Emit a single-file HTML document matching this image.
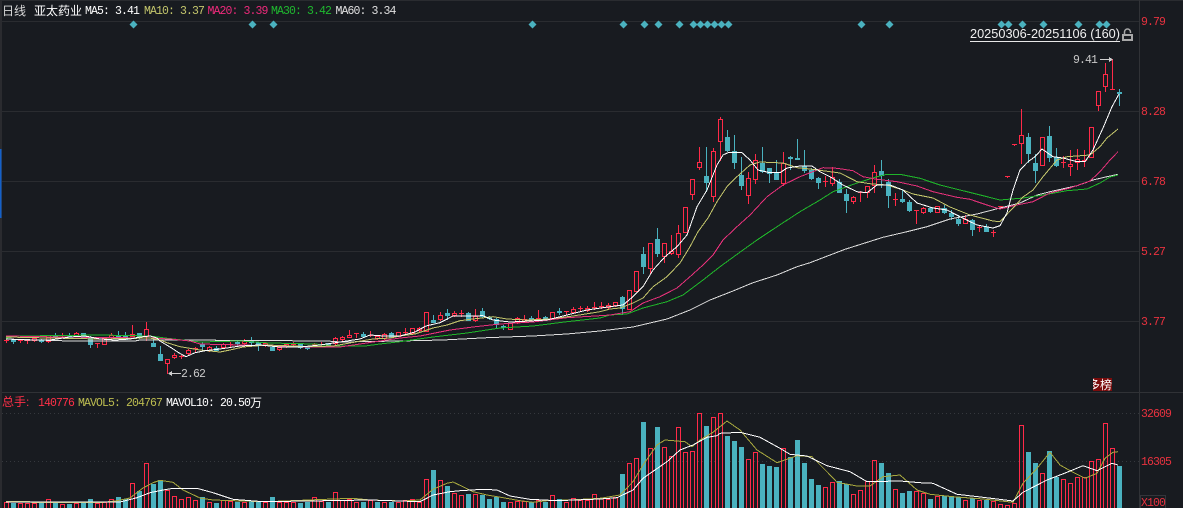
<!DOCTYPE html>
<html><head><meta charset="utf-8"><style>
html,body{margin:0;padding:0;background:#181b20;width:1183px;height:508px;overflow:hidden}
svg{display:block;position:absolute;left:0;top:0}
text{font-family:"Liberation Mono","WenQuanYi Zen Hei","Noto Sans CJK SC",monospace;font-size:11.5px;letter-spacing:-.9px}
.cjk{font-family:"Liberation Sans","WenQuanYi Zen Hei","Noto Sans CJK SC",sans-serif;font-size:12px;letter-spacing:0}
.l{fill:none;stroke-width:1;shape-rendering:crispEdges}
.ax{fill:#e8323f}
</style></head><body>
<svg id="s" width="1183" height="508" viewBox="0 0 1183 508" xmlns="http://www.w3.org/2000/svg">
<rect width="1183" height="508" fill="#181b20"/>
<rect x="0" y="0" width="2" height="508" fill="#2a2b2f"/>
<rect x="0" y="149" width="1.5" height="69" fill="#1460c8"/>
<g shape-rendering="crispEdges" fill="#2a2c30">
<rect x="0" y="0" width="1183" height="1"/>
<rect x="2" y="21" width="1137" height="1"/>
<rect x="2" y="111" width="1137" height="1"/>
<rect x="2" y="181" width="1137" height="1"/>
<rect x="2" y="251" width="1137" height="1"/>
<rect x="2" y="321" width="1137" height="1"/>
<rect x="2" y="392" width="1181" height="1" fill="#303236"/>
<rect x="1139" y="0" width="1" height="508" fill="#303236"/>
</g>
<line x1="2" y1="413.5" x2="1139" y2="413.5" stroke="#35383d" stroke-dasharray="1 3" shape-rendering="crispEdges"/>
<line x1="2" y1="461.5" x2="1139" y2="461.5" stroke="#35383d" stroke-dasharray="1 3" shape-rendering="crispEdges"/>

<text class="cjk" x="2" y="15" fill="#d8d8d8">日线</text>
<text class="cjk" x="34" y="15" fill="#fff">亚太药业</text>
<text x="85" y="14" fill="#fff">MA5: 3.41</text>
<text x="144" y="14" fill="#c4c66c">MA10: 3.37</text>
<text x="207.500" y="14" fill="#ee2a7b">MA20: 3.39</text>
<text x="271" y="14" fill="#1fb82f">MA30: 3.42</text>
<text x="335.500" y="14" fill="#e0e0e0">MA60: 3.34</text>

<text x="1141" y="25" class="ax">9.79</text>
<text x="1141" y="115" class="ax">8.28</text>
<text x="1141" y="185" class="ax">6.78</text>
<text x="1141" y="255" class="ax">5.27</text>
<text x="1141" y="325" class="ax">3.77</text>
<text x="1141" y="417" class="ax">32609</text>
<text x="1141" y="465" class="ax">16305</text>
<rect x="1140.500" y="495.500" width="25" height="14" fill="none" stroke="#33353a"/>
<text x="1141" y="506" class="ax">X100</text>

<text class="cjk" x="2" y="406" fill="#ff3048">总手:</text>
<text x="38" y="406" fill="#ff3048">140776</text>
<text x="78" y="406" fill="#bcbc50">MAVOL5: 204767</text>
<text x="166" y="406" fill="#fff">MAVOL10: 20.50</text>
<text class="cjk" x="250" y="407" fill="#fff">万</text>

<text x="970" y="38" textLength="150" lengthAdjust="spacingAndGlyphs" style="font-family:'Liberation Sans',sans-serif;font-size:12.500px;letter-spacing:0" fill="#f0f0f0">20250306-20251106 (160)</text>
<rect x="970" y="41" width="150" height="1" fill="#e8e8e8" shape-rendering="crispEdges"/>
<g fill="none" stroke="#a8a8a8">
<path d="M1124.500 34V32a3 3 0 0 1 6 0v1" stroke-width="1.500"/>
<path fill-rule="evenodd" fill="#a8a8a8" stroke="none" d="M1122 34h11v7h-11zM1124 36v3h7v-3z"/>
</g>

<g id="dm" fill="#4ab2bf"></g>
<g id="vol"></g>
<g id="can"></g>

<polyline class="l" stroke="#ddd" points="6,339 70,341 135,341 140,340 290,340.500 295,341 327,341 340,342 400,341 443,340 487,337.700 533,336 567,334 600,331 633,327 667,319 690,310 710,300 733,291 753,282.700 777,275 797,266.700 810,262.700 845,249.300 883,237.300 907,231.700 927,226.700 950,219 977,214 1000,208 1020,203 1037,195 1050,191.700 1077,185.700 1093,180 1107,176.700 1118,174.300"/>
<polyline class="l" stroke="#1fb52a" points="6,338 20,336 60,335.500 100,335 150,336 165,338 200,342 240,341 270,343 315,344 333,346 365,346 380,344 400,341.700 433,337 467,333 500,328 533,326 567,321.700 600,318 610,315 627,314 643,308 667,301.700 683,295 703,280 720,266.700 743,250 757,240 777,226.700 800,211.700 820,200 833,191.700 857,183 877,176.700 887,174.300 900,174.300 920,178.300 940,185 967,191.700 987,196.700 1000,200 1023,198 1043,195 1067,190.700 1087,189 1100,183 1110,177 1118,175"/>
<polyline class="l" stroke="#e6317a" points="6,336 60,337 150,338 170,339 190,341 200,344 280,346 300,347 340,347 400,338 420,336 450,330 473,327 500,324 533,322 567,317.700 600,315.700 610,315 630,311.700 643,303 660,296.700 677,288 690,276.700 703,265 713,255 723,240 737,226.700 750,215 767,196.700 783,185 800,176.700 823,167.700 837,168.300 853,170.700 863,176.700 877,179.300 897,181.700 917,186 933,191.700 957,197.300 970,199.300 990,206 1000,209 1017,205 1033,201.700 1050,193 1070,188 1090,181 1100,171.700 1110,160 1118,151.700"/>
<polyline class="l" stroke="#c4c66c" points="6,337 50,338 100,339 150,338 160,340 167,342.700 180,346.700 200,350 220,352 230,350 243,347 267,345 293,346 313,346.700 333,346 357,341.700 373,339 390,338 400,336 415,334 433,328 447,325 460,320.700 473,319 493,316.700 507,319 527,320 550,319 573,316 600,311.700 610,309 620,308 633,303 643,298 653,286.700 667,276.700 680,263 690,246.700 698,231.700 708,218 717,201.700 727,186.700 737,176.700 750,165 760,162 783,163 797,167.700 810,169 840,173 857,181.700 872,184 887,185 903,190 913,194 933,198 950,207 970,215 993,221 1000,221.700 1013,208 1023,197 1033,190 1043,176.700 1057,160 1067,156.700 1090,155 1100,146.700 1107,138 1118,129"/>
<polyline class="l" stroke="#fff" points="6,339 30,340 50,340 70,337 85,336 100,339 115,340 130,339 140,337 150,336 157,338 160,341 170,347 180,353.500 186,356.700 195,352.700 205,350.700 220,349 240,346 260,345 280,347 300,347 320,345 340,342 360,339 370,335 384,336 400,336 415,332 426,326 440,322.700 453,316 467,316 483,315.700 493,320 510,322 530,321 547,320 567,315 587,310 610,306.700 623,305 633,296.700 643,286.700 653,270 665,256.700 677,246.700 687,235 697,206.700 707,190 717,165 723,155 728,152.700 742,152.700 750,160 758,170 770,172.700 780,172.700 787,168 800,166 812,166 820,171.700 830,176.700 843,185 857,191.700 867,192.700 877,185 890,185 903,190 917,203 933,208 947,210 960,216.700 977,225 993,228 1000,225.700 1007,213 1013,190 1020,170 1028,161.700 1035,156.700 1042,149 1053,156.700 1063,158 1077,161.700 1085,161.700 1093,150 1103,128 1112,106.700 1119,94"/>

<polyline class="l" stroke="#a8a83e" points="6,501.700 30,501.700 33,502.700 100,502.700 117,500.700 130,498 143,488 153,482.700 160,480.300 173,482.300 183,490 200,498 213,500 233,500.700 267,501.700 333,499 353,498.300 370,500 403,501 420,500 433,489.300 447,483.300 453,482 463,486.700 473,491.700 487,495 503,497.700 520,500.700 533,502.300 547,500.700 570,500 600,498.300 620,495 633,481.700 643,465 657,445 665,440 685,441.700 692,446.700 700,440 713,432.300 727,421 740,430 757,450 777,462.700 797,455.700 812,456.700 827,471.700 837,482.300 857,486 870,486 883,476.700 900,475 917,490 930,494.300 953,496.700 983,499 1013,502.300 1023,483.300 1037,468.300 1050,452.300 1060,465 1073,472.300 1085,478.300 1097,473.300 1105,458.300 1113,452.300 1118,451.700"/>
<polyline class="l" stroke="#fff" points="6,502 120,502 137,497.700 150,492.700 163,490 173,488.300 197,488.300 213,492.700 233,499.300 263,501.700 370,500 420,501.700 433,495 450,491.700 460,490.700 483,489.300 497,490 510,496 530,499.300 557,500.700 600,499 617,497.700 633,490 643,478.300 667,461.700 680,450 693,445 707,437.300 717,435.700 720,433.300 740,432.300 760,437.300 780,448.300 790,454.300 807,456 827,465.700 850,471.700 867,481.700 900,481 920,482.700 933,483.300 957,494.300 983,497.300 1013,501 1023,492.300 1047,480 1067,472.300 1083,465.700 1097,470.700 1112,463.300 1118,465"/>

<g shape-rendering="crispEdges" fill="#cfcfcf">
<rect x="171" y="373" width="10" height="1"/>
<path d="M168 373.500L172 371V376z"/>
<rect x="1100" y="59" width="10" height="1"/>
<path d="M1113 59.500L1109 57V62z"/>
</g>
<text x="181" y="377" fill="#c8c8c8">2.62</text>
<text x="1073" y="63" fill="#c8c8c8">9.41</text>

<clipPath id="cp"><rect x="1093" y="378" width="19" height="13"/></clipPath>
<rect x="1093" y="378" width="19" height="13" fill="#7a0c0c"/>
<text class="cjk" x="1088" y="389" fill="#fff" clip-path="url(#cp)">多榜</text>
</svg>
<script>
var NS="http://www.w3.org/2000/svg",R="#ff2a48",T="#4ab2bf";
function el(p,n,a){var e=document.createElementNS(NS,n);for(var k in a)e.setAttribute(k,a[k]);p.appendChild(e);return e}
var dm=document.getElementById("dm");
[133,252,273,532,623,644,658,679,693,700,707,714,721,728,861,889,1001,1008,1022,1043,1078,1099,1106].forEach(function(x){
 var c=x+.5;el(dm,"polygon",{points:c+",20.500 "+(c+4)+",24.500 "+c+",28.500 "+(c-4)+",24.500"})});
var v=[501.7,-502.7,503.3,502.7,503.3,-502.7,499.3,-502.7,504.3,-504,502.7,-503.3,-499.3,502.7,501.7,499.3,-497,-499.3,483.3,-491,463.3,-484.3,-480.3,490,496.3,499.3,497.3,500,-497.3,501.7,-503,500,500.7,-502,501.7,-500.7,-501.7,502,-497.3,501.7,501.7,501.7,-503,-502.3,496.7,501,-501.7,492.3,500,499,501.7,-501.7,499.7,-501.7,501.7,-501.7,501.7,500,499.3,502,479,-470,480,-486,492.7,495,-494,494,-495,-499,-496.7,-502,502,500.7,501,-501.7,500,-501.7,495,-499.3,501.7,498.3,500,500,494.3,498.3,499,496.7,-474,463.3,458.3,-422.3,448.3,-427,447.3,455.7,427.3,452.3,451,413.3,-426,417.3,413.3,-436,-441,-447,459,452.3,-464,-466,-467,448.3,-457,-440,-463,-479,-485,487.3,482.3,-481,-484.3,494,490.3,481.3,460.3,-463,-473.3,489.3,-493,-491,490.7,493.3,-499,496.3,-495.7,-495.7,-497,500.3,-497.7,500.3,-500,501,504.3,505,503.3,425.3,-452,-463,473.3,-451,-476.7,479.3,483.3,477.3,476.7,461.3,459.3,423.3,448.3,-466];
var g=document.getElementById("vol");g.setAttribute("shape-rendering","crispEdges");
v.forEach(function(a,i){var x=6+7*i;
 if(a<0){var t=Math.round(-a);el(g,"rect",{x:x-2,y:t,width:5,height:510-t,fill:T})}
 else{var t=Math.round(a);el(g,"rect",{x:x-1.5,y:t+.5,width:4,height:515-t,fill:"none",stroke:R})}
});
var c=[[339.5,341,339,342,1],[339,341,339,343,0],[340,341,339,342,1],[340,341,339,343,1],[338,340,337,341,1],[340,341,339,342,0],[335,341,335,342,1],[334.5,335,333,336,0],[334.5,335.5,333,337,1],[334.5,335,333,336,0],[333,336,332,336,1],[333,337,333,337,0],[337,344,336,347,0],[343,344,343,347,1],[338,344,338,344,1],[335,337,333,338,1],[336,336.5,331,337,0],[336,339,332,339,0],[334,336,325,336,1],[333,337,333,338,0],[329,336,322,340,1],[343,346,338,346,0],[354,360,346,360,0],[359,363,359,373,1],[355,356.5,353,358,1],[356,357,355,358,1],[350,353,349,354,1],[348,349,347,352,1],
[344,346,342,350,0],[347,350,346,351,1],[348,350,346,349,0],[344,347,343,348,1],[344,345,342,347,1],[342,343,340,345,0],[341,343,339,345,1],[341,342,337,344,0],[342,345,342,350,0],[343,345,342,346,1],[347,350,345,350,0],[347,349,346,350,1],[344,346,343,347,1],[344,345,342,346,1],[344,347,344,348,0],[347,348,346,349,0],[344,345,343,346,1],[343.5,344.5,342,346,1],[343,345,343,346,0],[337.5,343,337,344,1],[337,339,336,340,1],[335,337,330,337,1],[333,334,333,337,1],[334,336,332,337,0],[335,336,331,336,1],[336,338,335,339,1],[334,338,333,339,1],[332.5,336.5,332,337,0],[332,336,332,336,1],[332,333,328,333,1],[328,333,328,333,1],[328,330,327,331,1],
[312,331,312,331,1],[320,322,315,322,0],[315,319,312,320,1],[313,315,309,319,0],[313,315,311,316,1],[313,314,310,316,1],[313,320,312,320,0],[316,320,309,321,1],[311,316,308,317,0],[317,318,316,319,0],[319,324,318,327,0],[326,327,325,329,0],[323,329,323,329,1],[318,322,317,323,1],[319,321,315,322,1],[318,319,316,321,0],[318,320,310,320,1],[317,318,316,319,0],[312,318,312,318,1],[311,312,308,314,0],[311,312,311,314,1],[309,312,307,313,1],[308,309,306,310,1],[308,310,306,311,1],[307,308,302,309,1],[306,307,302,308,1],[305,307,303,309,1],[302,305,302,306,1],[297,308,296,314,0],[290,309,290,309,1],[271,291,271,291,1],
[254,266,247,273,0],[243,268,243,273,1],[239,253,228,256,0],[243,256,243,262,1],[251,253,235,254,1],[233,254,225,257,1],[207,232,207,232,1],[179,194,179,199,1],[162,167,147,169,1],[176,182,147,191,0],[151,196,148,201,1],[119,141,117,160,1],[137,150,130,151,0],[151,162,135,168,0],[175,185,157,189,0],[178,195,172,203,1],[160,179,154,183,1],[163,171,147,172,0],[168,173,168,182,0],[173,179,160,179,0],[163,183,152,185,1],[157,158,156,169,0],[158,159,139,159,0],[166,170,150,172,0],[170,178,168,179,0],[178,182,177,188,0],[181,182,176,186,1],[177,183,167,185,1],[182,192,179,192,0],[194,200,189,212,0],[197,201,196,203,1],[191.5,192.5,191,201,1],[186,192,186,197,1],[172,185,165,192,1],[171,175,160,187,0],[182,195,179,207,0],[199,200,193,205,1],[199,201,190,202,0],[202,210,200,211,0],[210,211,210,223,1],[208,212,207,213,1],[208,211,207,212,0],[206,212,206,212,1],[208,212,205,213,0],[213,216,210,219,0],[219,223,215,225,0],[219,223,215,223,1],[220,229,219,235,0],[227,228,225,231,1],[227,231,224,231,0],[232,233,230,236,1],[205.5,206.5,205.5,206.5,1],[176,177,176,177,1],[144,145,144,145,1],[135,143,109,163,1],[137,153,133,162,0],[163,170,154,182,0],[137,165,137,165,1],[136,157,126,161,0],[157,165,148,166,0],[162,163,156,167,1],[164,166,150,175,1],[159,162,149,169,1],[160,161,150,166,1],[127,157,127,157,1],[91,105,91,110,1],[74,86,63,91,1],[88.5,89.5,59,89,1],[91.5,92.5,89,105,0]];
var g2=document.getElementById("can");g2.setAttribute("shape-rendering","crispEdges");
c.forEach(function(d,i){var x=6+7*i,t=Math.round(d[0]),b=Math.round(d[1]),w=Math.round(d[2]),u=Math.round(d[3]),col=d[4]?R:T;
 if(u>w)el(g2,"rect",{x:x,y:w,width:1,height:u-w+1,fill:col});
 if(b-t<2){el(g2,"rect",{x:x-2,y:t,width:5,height:Math.max(b-t,1)+(d[4]?0:1),fill:col})}
 else if(d[4]){el(g2,"rect",{x:x-1.5,y:t+.5,width:4,height:b-t,fill:"#181b20",stroke:col})}
 else{el(g2,"rect",{x:x-2,y:t,width:5,height:b-t+1,fill:col})}
});
</script>
</body></html>
